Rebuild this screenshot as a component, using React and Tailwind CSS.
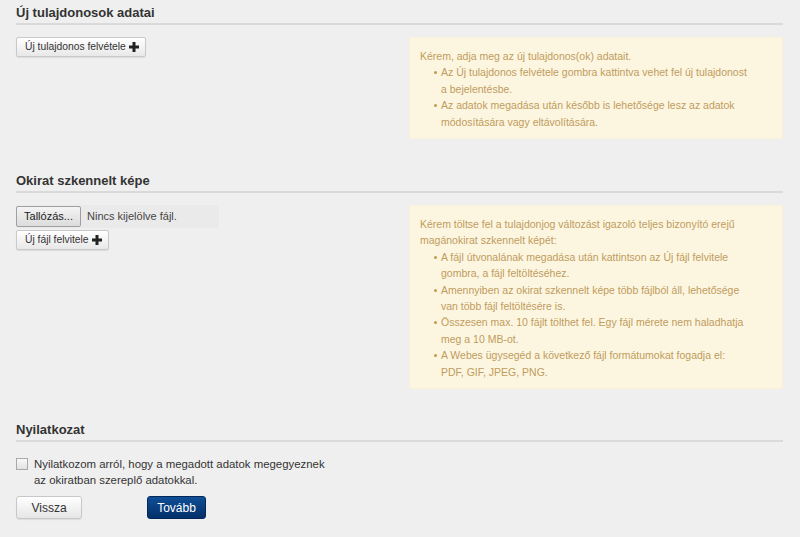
import React from "react";

const Plus = () => (
  <svg width="10" height="10" viewBox="0 0 10 10" className="shrink-0">
    <rect x="3.5" y="0" width="3" height="10" fill="#222" />
    <rect x="0" y="3.5" width="10" height="3" fill="#222" />
  </svg>
);

const SectionTitle = ({ children }) => (
  <div className="border-b-2 border-[#dadada] pb-[2px]">
    <h2 className="text-[13px] leading-[16px] font-bold text-[#333]">{children}</h2>
  </div>
);

const AddButton = ({ label }) => (
  <button className="h-[20px] flex items-center gap-[3px] pl-[8px] pr-[6px] border border-[#c9c9c9] rounded-[2px] bg-gradient-to-b from-white to-[#e8e8e8] text-[10.3px] text-[#333] shadow-[0_1px_1px_rgba(0,0,0,0.08)]">
    {label}
    <Plus />
  </button>
);

const Bullet = ({ children }) => (
  <li className="flex">
    <span className="w-[21px] shrink-0 flex">
      <span className="ml-[14px] mt-[7px] w-[3px] h-[3px] rounded-full bg-[#c09853]" />
    </span>
    <span>{children}</span>
  </li>
);

const InfoBox = ({ intro, items }) => (
  <div className="w-[374px] shrink-0 bg-[#fcf6e1] border border-[#fbf0d8] rounded-[2px] pl-[10px] pr-[20px] pt-[10px] pb-[8px] text-[10.5px] leading-[16.4px] text-[#c19b5c] whitespace-nowrap">
    <p>{intro}</p>
    <ul>
      {items.map((it, i) => (
        <Bullet key={i}>{it}</Bullet>
      ))}
    </ul>
  </div>
);

export default function App() {
  return (
    <div className="min-h-[537px] bg-[#efefef] pl-4 pr-[17px] pt-[5px] font-['Liberation_Sans',Arial,sans-serif]">
      {/* Új tulajdonosok */}
      <SectionTitle>Új tulajdonosok adatai</SectionTitle>
      <div className="flex mt-3">
        <div className="flex-1 flex items-start">
          <AddButton label="Új tulajdonos felvétele" />
        </div>
        <InfoBox
          intro="Kérem, adja meg az új tulajdonos(ok) adatait."
          items={[
            <>Az Új tulajdonos felvétele gombra kattintva vehet fel új tulajdonost<br />a bejelentésbe.</>,
            <>Az adatok megadása után később is lehetősége lesz az adatok<br />módosítására vagy eltávolítására.</>,
          ]}
        />
      </div>

      {/* Okirat */}
      <div className="mt-[34px]">
        <SectionTitle>Okirat szkennelt képe</SectionTitle>
      </div>
      <div className="flex mt-3">
        <div className="flex-1 flex flex-col items-start gap-[2px]">
          <div className="w-[203px] h-[23px] flex items-center bg-[#eaeaea]">
            <button className="h-[21px] w-[65px] border border-[#a0a0a0] rounded-[2px] bg-gradient-to-b from-[#f4f4f4] to-[#dcdcdc] text-[11px] text-[#222]">
              Tallózás...
            </button>
            <span className="ml-[6px] text-[11px] text-[#444]">Nincs kijelölve fájl.</span>
          </div>
          <AddButton label="Új fájl felvitele" />
        </div>
        <InfoBox
          intro={<>Kérem töltse fel a tulajdonjog változást igazoló teljes bizonyító erejű<br />magánokirat szkennelt képét:</>}
          items={[
            <>A fájl útvonalának megadása után kattintson az Új fájl felvitele<br />gombra, a fájl feltöltéséhez.</>,
            <>Amennyiben az okirat szkennelt képe több fájlból áll, lehetősége<br />van több fájl feltöltésére is.</>,
            <>Összesen max. 10 fájlt tölthet fel. Egy fájl mérete nem haladhatja<br />meg a 10 MB-ot.</>,
            <>A Webes ügysegéd a következő fájl formátumokat fogadja el:<br />PDF, GIF, JPEG, PNG.</>,
          ]}
        />
      </div>

      {/* Nyilatkozat */}
      <div className="mt-[33px]">
        <SectionTitle>Nyilatkozat</SectionTitle>
      </div>
      <label className="mt-[14px] flex items-start gap-[6px] text-[11.4px] leading-[16px] text-[#333]">
        <span className="mt-[2px] w-[12px] h-[12px] border border-[#a9a9a9] bg-gradient-to-b from-[#f8f8f8] to-[#e2e2e2] shrink-0" />
        <span>
          Nyilatkozom arról, hogy a megadott adatok megegyeznek
          <br />
          az okiratban szereplő adatokkal.
        </span>
      </label>
      <div className="mt-[8px] flex items-center pb-4">
        <button className="h-[23px] w-[66px] border border-[#c8c8c8] rounded-[3px] bg-gradient-to-b from-white to-[#e6e6e6] text-[12px] text-[#333] shadow-[0_1px_1px_rgba(0,0,0,0.08)]">
          Vissza
        </button>
        <button className="ml-[65px] h-[23px] w-[59px] border border-[#02285a] rounded-[3px] bg-gradient-to-b from-[#104f97] to-[#04306a] text-[12px] text-white">
          Tovább
        </button>
      </div>
    </div>
  );
}
